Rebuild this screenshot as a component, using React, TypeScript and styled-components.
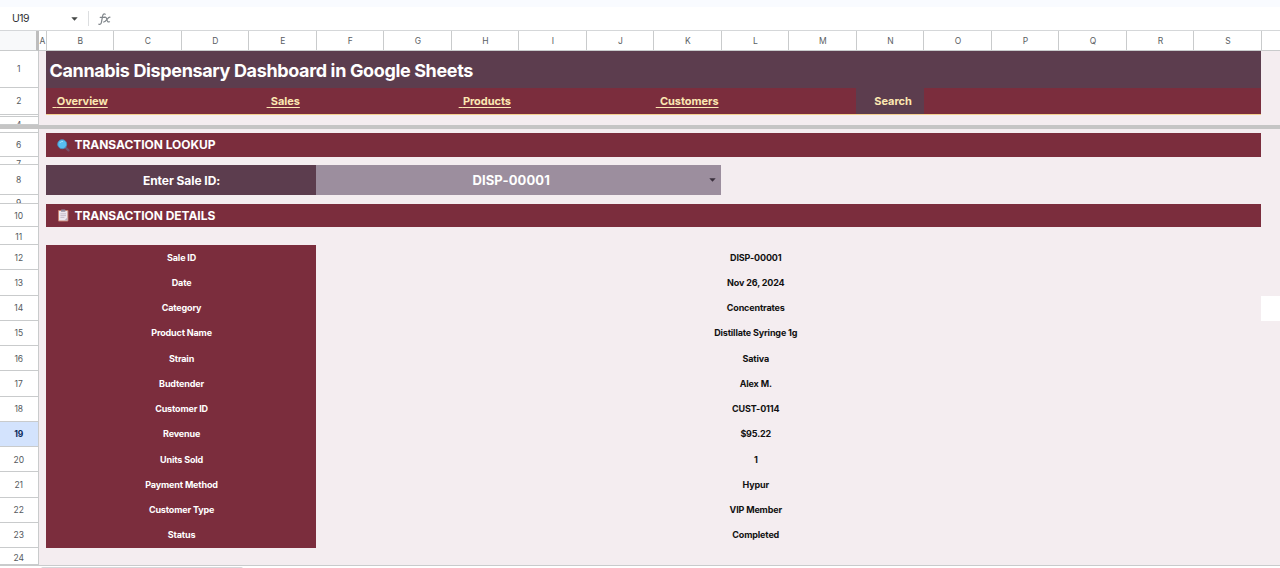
import React from "react";
import styled, { createGlobalStyle } from "styled-components";

const plum = "#5c3d4e";
const wine = "#7b2d3d";
const blush = "#f4edf0";
const cream = "#fce8b2";
const line = "#c9cbcc";
const COL = 67.53;

const GlobalStyle = createGlobalStyle`
  * { box-sizing: border-box; }
  body { margin: 0; overflow: hidden; background: #fff; }
`;

const Sheet = styled.div`
  width: 1280px;
  height: 568px;
  overflow: hidden;
  display: flex;
  flex-direction: column;
  font-family: Inter, "Liberation Sans", sans-serif;
  background: #fff;
`;

const TopStrip = styled.div`
  flex: none;
  height: 7px;
  background: #f9fbff;
`;

const FormulaBar = styled.div`
  flex: none;
  height: 24px;
  display: flex;
  align-items: center;
  border-bottom: 1px solid #d5d7d9;
  color: #303134;
`;

const NameBox = styled.div`
  width: 89px;
  height: 15px;
  display: flex;
  align-items: center;
  justify-content: space-between;
  padding: 0 10px 0 12px;
  border-right: 1px solid #dcdee0;
  font-size: 10.5px;
  letter-spacing: -0.5px;
`;

const Fx = styled.svg`
  margin: 1px 0 0 9px;
  display: block;
`;

const HeaderRow = styled.div`
  flex: none;
  height: 20px;
  display: flex;
  color: #5a5e62;
  font-size: 8.5px;
`;

const Corner = styled.div`
  flex: none;
  width: 38.5px;
  border-right: 3px solid #bdbdbd;
  border-bottom: 1px solid ${line};
  background: #f8f9fa;
`;

const ColHead = styled.div<{ $w: number }>`
  flex: none;
  width: ${(p) => p.$w}px;
  display: flex;
  align-items: center;
  justify-content: center;
  padding-left: 1px;
  border-right: 1px solid ${line};
  border-bottom: 1px solid ${line};
`;

const Row = styled.div<{ $h: number }>`
  flex: none;
  height: ${(p) => p.$h}px;
  display: flex;
`;

const RowHead = styled.div<{ $active?: boolean; $top?: number }>`
  flex: none;
  width: 38.5px;
  display: flex;
  align-items: ${(p) => (p.$top === undefined ? "center" : "flex-start")};
  justify-content: center;
  padding-top: ${(p) => p.$top ?? 1}px;
  overflow: hidden;
  border-right: 1px solid ${line};
  border-bottom: 1px solid ${line};
  background: ${(p) => (p.$active ? "#d3e3fd" : "#fff")};
  color: ${(p) => (p.$active ? "#0b2a5c" : "#55595d")};
  font-size: 8.5px;
  font-weight: ${(p) => (p.$active ? 700 : 400)};
  line-height: 10px;
`;

const Cells = styled.div`
  flex: 1;
  display: flex;
  padding-left: 7.5px;
  background: ${blush};
`;

const Band = styled.div<{ $bg?: string }>`
  width: 1215.4px;
  display: flex;
  align-items: center;
  background: ${(p) => p.$bg ?? "transparent"};
  color: #fff;
`;

const Title = styled.h1`
  margin: 0 0 0 3.5px;
  padding-top: 1px;
  font-size: 18px;
  font-weight: 700;
  letter-spacing: -0.36px;
  white-space: nowrap;
`;

const NavBand = styled(Band)`
  border-bottom: 1px solid #f3cf8f;
  font-size: 11px;
  font-weight: 700;
  letter-spacing: -0.05px;
  line-height: 14px;
  color: ${cream};
`;

const NavCell = styled.div<{ $pad: number }>`
  width: ${COL * 3}px;
  padding-left: ${(p) => p.$pad}px;
`;

const NavLink = styled.span`
  white-space: pre;
  text-decoration: underline;
  text-underline-offset: 1.5px;
  text-decoration-skip-ink: none;
`;

const Indent = styled.span`
  letter-spacing: -0.5px;
`;

const ActiveTab = styled.div`
  width: ${COL}px;
  align-self: stretch;
  display: flex;
  align-items: center;
  justify-content: center;
  padding-left: 6px;
  background: ${plum};
`;

const FreezeBar = styled.div`
  flex: none;
  height: 4px;
  background: #c5c5c5;
`;

const SectionIcon = styled.svg`
  margin: 0 5px 0 11px;
`;

const SectionTitle = styled.h2`
  margin: 0 0 0 -0.5px;
  padding-bottom: 1px;
  font-size: 12px;
  font-weight: 700;
  letter-spacing: -0.04px;
`;

const LookupLabel = styled.div`
  width: ${COL * 4}px;
  align-self: stretch;
  display: flex;
  align-items: center;
  justify-content: center;
  padding: 1px 0 0 1px;
  background: ${plum};
  font-size: 12px;
  font-weight: 700;
  letter-spacing: -0.05px;
`;

const LookupValue = styled.div`
  width: ${COL * 6}px;
  align-self: stretch;
  display: grid;
  grid-template-columns: 1fr 12px;
  align-items: center;
  text-align: center;
  background: #9c8e9e;
  font-size: 13px;
  font-weight: 700;
  letter-spacing: 0.1px;
`;

const SaleId = styled.span`
  padding-right: 3px;
`;

const Label = styled.div`
  width: ${COL * 4}px;
  align-self: stretch;
  display: flex;
  align-items: center;
  justify-content: center;
  padding: 0 0 1px 1px;
  background: ${wine};
  font-size: 9px;
  font-weight: 700;
  letter-spacing: -0.15px;
`;

const Value = styled.div`
  flex: 1;
  padding: 0 66px 1px 0;
  text-align: center;
  color: #111;
  font-size: 9px;
  font-weight: 700;
  letter-spacing: -0.15px;
`;

const BlankCell = styled.div`
  flex: 1;
  background: #fff;
`;

const Footer = styled.div`
  flex: none;
  height: 3px;
  padding: 1px 0 0 41px;
  border-top: 1px solid ${line};
  background: #fff;
`;

const ScrollThumb = styled.div`
  width: 202px;
  height: 3px;
  border-radius: 2px 2px 0 0;
  background: #d5d7da;
`;

const Caret = ({ color }: { color: string }) => (
  <svg width="7" height="4" viewBox="0 0 7 4">
    <path d="M.3 .2h6.4L3.5 3.7z" fill={color} />
  </svg>
);

const Magnifier = () => (
  <SectionIcon width="13" height="13" viewBox="0 0 13 13">
    <path d="M8.6 8.6l2.9 2.8" stroke="#75516b" strokeWidth="2.2" strokeLinecap="round" />
    <circle cx="5.2" cy="5.2" r="4.5" fill="#58bdf0" stroke="#4a8fbd" strokeWidth=".9" />
    <path d="M3 3.7c.7-1 1.6-1.3 2.6-1.2" stroke="#a6e2fb" strokeWidth="1" fill="none" strokeLinecap="round" />
  </SectionIcon>
);

const Clipboard = () => (
  <SectionIcon width="13" height="13" viewBox="0 0 13 13">
    <rect x="1" y="1.1" width="10.4" height="11.3" rx=".8" fill="#c98474" />
    <rect x="2" y="2" width="8.4" height="9.5" fill="#ece6ee" />
    <rect x="4" y=".5" width="4.4" height="2.3" rx=".6" fill="#938c9e" />
    <path d="M3.4 4.8h5.6M3.4 6.6h5.6M3.4 8.4h4" stroke="#bcb2c2" strokeWidth=".8" />
    <path d="M7.4 11.5l3-2.9v2.9z" fill="#b9adbc" />
  </SectionIcon>
);

const columns = "BCDEFGHIJKLMNOPQRS".split("");

const details: [string, string][] = [
  ["Sale ID", "DISP-00001"],
  ["Date", "Nov 26, 2024"],
  ["Category", "Concentrates"],
  ["Product Name", "Distillate Syringe 1g"],
  ["Strain", "Sativa"],
  ["Budtender", "Alex M."],
  ["Customer ID", "CUST-0114"],
  ["Revenue", "$95.22"],
  ["Units Sold", "1"],
  ["Payment Method", "Hypur"],
  ["Customer Type", "VIP Member"],
  ["Status", "Completed"],
];

const nav: [string, number][] = [
  ["Overview", 6.5],
  ["Sales", 18],
  ["Products", 7.5],
  ["Customers", 2],
];

type SheetRowProps = { n?: number; h: number; top?: number; children?: React.ReactNode };

const SheetRow = ({ n, h, top, children }: SheetRowProps) => (
  <Row $h={h}>
    <RowHead $active={n === 19} $top={top}>
      {n}
    </RowHead>
    <Cells>{children}</Cells>
  </Row>
);

export default function App() {
  return (
    <Sheet>
      <GlobalStyle />
      <TopStrip />
      <FormulaBar>
        <NameBox>
          U19 <Caret color="#444746" />
        </NameBox>
        <Fx width="13" height="14" viewBox="0 0 13 14" fill="none" stroke="#80868b" strokeWidth="1.2" strokeLinecap="round">
          <path d="M7.3 2.2C5.6 1.4 4.9 2.6 4.6 4.2L3.4 10.3C3.1 12 2.2 12.7.8 12.2M2.2 5.3h4.4" />
          <path d="M6.3 5.3c1.7-.6 2.2.5 2.6 2.2.4 1.9.9 2.9 2.6 2.3M11.9 5.2C9.7 5 8.2 10.3 5.5 10" />
        </Fx>
      </FormulaBar>
      <HeaderRow>
        <Corner />
        <ColHead $w={8}>A</ColHead>
        {columns.map((c) => (
          <ColHead key={c} $w={COL}>
            {c}
          </ColHead>
        ))}
        <ColHead $w={30} />
      </HeaderRow>
      <SheetRow n={1} h={37} top={13}>
        <Band $bg={plum}>
          <Title>Cannabis Dispensary Dashboard in Google Sheets</Title>
        </Band>
      </SheetRow>
      <SheetRow n={2} h={27} top={8}>
        <NavBand $bg={wine}>
          {nav.map(([name, pad]) => (
            <NavCell key={name} $pad={pad}>
              <NavLink>
                <Indent>{"\u00a0\u00a0"}</Indent>
                {name}
              </NavLink>
            </NavCell>
          ))}
          <ActiveTab>Search</ActiveTab>
        </NavBand>
      </SheetRow>
      <SheetRow h={2} />
      <SheetRow n={4} h={8} top={3} />
      <FreezeBar />
      <SheetRow h={4} />
      <SheetRow n={6} h={24}>
        <Band $bg={wine}>
          <Magnifier />
          <SectionTitle>TRANSACTION LOOKUP</SectionTitle>
        </Band>
      </SheetRow>
      <SheetRow n={7} h={8} top={2} />
      <SheetRow n={8} h={30}>
        <Band>
          <LookupLabel>Enter Sale ID:</LookupLabel>
          <LookupValue>
            <SaleId>DISP-00001</SaleId>
            <Caret color="#3a2f3c" />
          </LookupValue>
        </Band>
      </SheetRow>
      <SheetRow n={9} h={9} top={3} />
      <SheetRow n={10} h={23}>
        <Band $bg={wine}>
          <Clipboard />
          <SectionTitle>TRANSACTION DETAILS</SectionTitle>
        </Band>
      </SheetRow>
      <SheetRow n={11} h={18} top={5} />
      {details.map(([label, value], i) => (
        <SheetRow key={label} n={12 + i} h={25.25}>
          <Band>
            <Label>{label}</Label>
            <Value>{value}</Value>
          </Band>
          {i === 2 && <BlankCell />}
        </SheetRow>
      ))}
      <SheetRow n={24} h={17} top={5} />
      <Footer>
        <ScrollThumb />
      </Footer>
    </Sheet>
  );
}
